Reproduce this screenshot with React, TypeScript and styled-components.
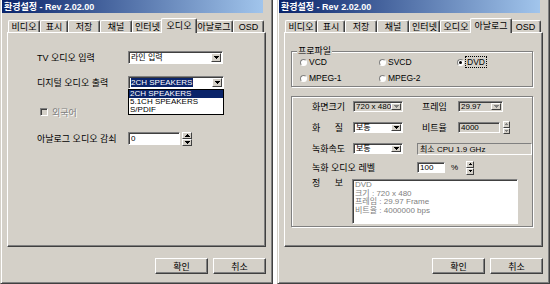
import { createGlobalStyle, styled } from 'styled-components';

const FACE = '#d4d0c8';
const SHADOW = '#808080';
const DARK = '#404040';
const LIGHT = '#ffffff';
const SELECT = '#0a246a';

const GlobalStyle = createGlobalStyle`
  html, body {
    margin: 0;
    padding: 0;
    background: #fff;
  }

  body {
    font-family: "Liberation Sans", "Noto Sans CJK KR", sans-serif;
    font-size: 8px;
    color: #000;
  }

  * {
    box-sizing: border-box;
  }
`;

const Screen = styled.div`
  width: 550px;
  height: 284px;
  display: flex;
  gap: 4px;
  overflow: hidden;
`;

const Window = styled.div`
  width: 273px;
  height: 284px;
  flex: none;
  display: flex;
  flex-direction: column;

  padding: 0 1px 1px;
  background: ${FACE};
  border-left: 1px solid ${FACE};
  border-right: 1px solid ${DARK};
  border-bottom: 1px solid ${DARK};
  box-shadow: inset 1px 0 0 ${LIGHT}, inset -1px -1px 0 ${SHADOW};
`;

const TitleBar = styled.div`
  height: 13px;
  flex: none;
  display: flex;
  align-items: center;

  padding-left: 2px;
  background: linear-gradient(to right, ${SELECT}, #a6caf0);
`;

const TitleText = styled.span`
  font-size: 9px;
  font-weight: 700;
  color: #fff;
  white-space: nowrap;
`;

const TitleEnd = styled.div`
  width: 8px;
  height: 100%;
  margin-left: auto;
  background: ${FACE};
`;

const Body = styled.div`
  flex: 1;
  display: flex;
  flex-direction: column;
  padding: 5px 5px 0;
`;

const TabStrip = styled.div`
  height: 14px;
  flex: none;
  display: flex;
  align-items: flex-end;
  padding-left: 1px;
  position: relative;
  z-index: 1;
`;

const Tab = styled.div<{ $w: number; $active?: boolean }>`
  width: ${(p) => (p.$active ? p.$w + 4 : p.$w)}px;
  height: ${(p) => (p.$active ? 15 : 12)}px;
  flex: none;
  display: flex;
  align-items: center;
  justify-content: center;
  margin: ${(p) => (p.$active ? '0 -2px -1px' : '0')};
  position: relative;
  z-index: ${(p) => (p.$active ? 2 : 1)};

  padding-bottom: ${(p) => (p.$active ? 2 : 0)}px;
  background: ${FACE};
  border-top: 1px solid ${LIGHT};
  border-left: 1px solid ${LIGHT};
  border-right: 1px solid ${DARK};
  border-radius: 2px 2px 0 0;
  box-shadow: inset -1px 0 0 ${SHADOW};

  font-size: 9px;
  white-space: nowrap;
`;

const Panel = styled.div`
  height: 215px;
  flex: none;
  display: flex;
  flex-direction: column;

  border-top: 1px solid ${LIGHT};
  border-left: 1px solid ${LIGHT};
  border-right: 1px solid ${DARK};
  border-bottom: 1px solid ${DARK};
  box-shadow: inset -1px -1px 0 ${SHADOW};
`;

const ButtonRow = styled.div`
  display: flex;
  justify-content: flex-end;
  gap: 5px;
  margin-top: 11px;
`;

const PushButton = styled.div`
  width: 53px;
  height: 16px;
  display: flex;
  align-items: center;
  justify-content: center;

  background: ${FACE};
  border: 1px solid;
  border-color: ${LIGHT} ${DARK} ${DARK} ${LIGHT};
  box-shadow: inset -1px -1px 0 ${SHADOW};

  font-size: 9px;
`;

/* ---------- form controls ---------- */

const FormRow = styled.div<{ $gap: number; $h?: number; $top?: boolean }>`
  height: ${(p) => p.$h ?? 11}px;
  flex: none;
  display: flex;
  align-items: ${(p) => (p.$top ? 'flex-start' : 'center')};
  margin-top: ${(p) => p.$gap}px;
`;

const FieldLabel = styled.span<{ $w?: number; $ml?: number; $mt?: number }>`
  width: ${(p) => (p.$w ? `${p.$w}px` : 'auto')};
  flex: none;
  margin-left: ${(p) => p.$ml ?? 0}px;
  margin-top: ${(p) => p.$mt ?? 0}px;
  font-size: 9px;
  white-space: nowrap;
`;

const SpacedLabel = styled.span`
  width: 31px;
  display: flex;
  justify-content: space-between;
`;

const Sunken = styled.div<{ $w: number; $h?: number; $ml?: number; $disabled?: boolean }>`
  position: relative;
  width: ${(p) => p.$w}px;
  height: ${(p) => (p.$h ? `${p.$h}px` : '100%')};
  flex: none;
  display: flex;
  align-items: center;
  margin-left: ${(p) => p.$ml ?? 0}px;

  padding: 1px 1px 1px 2px;
  background: ${(p) => (p.$disabled ? FACE : '#fff')};
  border: 1px solid;
  border-color: ${SHADOW} ${LIGHT} ${LIGHT} ${SHADOW};
  box-shadow: inset 1px 1px 0 ${DARK};
`;

const FieldText = styled.span`
  flex: 1;
  overflow: hidden;
  white-space: nowrap;
  font-size: 8px;
  line-height: 9px;
`;

const Highlight = styled.span`
  background: ${SELECT};
  color: #fff;
  padding-right: 1px;
`;

const DropButton = styled.div`
  width: 10px;
  height: 100%;
  flex: none;
  display: flex;
  align-items: center;
  justify-content: center;

  background: ${FACE};
  border: 1px solid;
  border-color: ${LIGHT} ${DARK} ${DARK} ${LIGHT};
`;

const DropList = styled.div`
  position: absolute;
  top: calc(100% + 1px);
  left: -1px;
  right: -1px;
  z-index: 5;

  background: #fff;
  border: 1px solid #000;
`;

const ListItem = styled.div<{ $selected?: boolean }>`
  height: 8px;
  padding-left: 1px;
  font-size: 8px;
  line-height: 8px;
  white-space: nowrap;
  background: ${(p) => (p.$selected ? SELECT : 'transparent')};
  color: ${(p) => (p.$selected ? '#fff' : '#000')};
`;

const SpinBox = styled.div<{ $w: number; $h: number; $ml: number }>`
  width: ${(p) => p.$w}px;
  height: ${(p) => p.$h}px;
  flex: none;
  display: flex;
  flex-direction: column;
  margin-left: ${(p) => p.$ml}px;
`;

const SpinHalf = styled.div`
  flex: 1;
  display: flex;
  align-items: center;
  justify-content: center;

  background: ${FACE};
  border: 1px solid;
  border-color: ${LIGHT} ${DARK} ${DARK} ${LIGHT};
`;

const Arrow = ({ up, small, disabled }: { up?: boolean; small?: boolean; disabled?: boolean }) => {
  const d = small
    ? up
      ? 'M1 0h1v1H1z M0 1h3v1H0z'
      : 'M0 0h3v1H0z M1 1h1v1H1z'
    : up
      ? 'M2 0h1v1H2z M1 1h3v1H1z M0 2h5v1H0z'
      : 'M0 0h5v1H0z M1 1h3v1H1z M2 2h1v1H2z';
  return (
    <svg width={small ? 3 : 5} height={small ? 2 : 3} shapeRendering="crispEdges">
      <path d={d} fill={disabled ? SHADOW : '#000'} />
    </svg>
  );
};

const Spinner = ({ w, h, ml, small, disabled }: { w: number; h: number; ml: number; small?: boolean; disabled?: boolean }) => (
  <SpinBox $w={w} $h={h} $ml={ml}>
    <SpinHalf>
      <Arrow up small={small} disabled={disabled} />
    </SpinHalf>
    <SpinHalf>
      <Arrow small={small} disabled={disabled} />
    </SpinHalf>
  </SpinBox>
);

const Combo = ({ w, children, disabled, ml, list }: { w: number; children: React.ReactNode; disabled?: boolean; ml?: number; list?: string[] }) => (
  <Sunken $w={w} $ml={ml} $disabled={disabled}>
    <FieldText>{children}</FieldText>
    <DropButton>
      <Arrow disabled={disabled} />
    </DropButton>
    {list && (
      <DropList>
        {list.map((item, i) => (
          <ListItem key={item} $selected={i === 0}>
            {item}
          </ListItem>
        ))}
      </DropList>
    )}
  </Sunken>
);

/* ---------- audio tab ---------- */

const AudioPage = styled.div`
  display: flex;
  flex-direction: column;
  padding: 18px 0 0 29px;
`;

const CheckRow = styled.div`
  height: 10px;
  display: flex;
  align-items: center;
  gap: 4px;
  margin: 18px 0 0 3px;
`;

const CheckBox = styled.div`
  width: 8px;
  height: 8px;
  background: ${FACE};
  border: 1px solid;
  border-color: ${SHADOW} ${LIGHT} ${LIGHT} ${SHADOW};
  box-shadow: inset 1px 1px 0 ${DARK};
`;

const DisabledText = styled.span`
  font-size: 9px;
  color: ${SHADOW};
  text-shadow: 1px 1px 0 ${LIGHT};
`;

/* ---------- analog tab ---------- */

const AnalogPage = styled.div`
  display: flex;
  flex-direction: column;
  padding: 18px 0 0 6px;
`;

const GroupBox = styled.div`
  position: relative;
  width: 242px;
  height: 36px;
  display: grid;
  grid-template-columns: 79px 78px auto;
  grid-auto-rows: 8px;
  row-gap: 8px;

  padding: 6px 0 0 8px;
  border: 1px solid ${SHADOW};
  box-shadow: inset 1px 1px 0 ${LIGHT}, 1px 1px 0 ${LIGHT};
`;

const GroupLegend = styled.span`
  position: absolute;
  top: -6px;
  left: 5px;
  padding: 0 1px;
  background: ${FACE};
  font-size: 9px;
  line-height: 10px;
`;

const RadioItem = styled.div`
  display: flex;
  align-items: center;
  gap: 2px;
  font-size: 8.5px;
  white-space: nowrap;
`;

const RadioDot = styled.div<{ $checked?: boolean }>`
  width: 7px;
  height: 7px;
  flex: none;
  display: flex;
  align-items: center;
  justify-content: center;
  border-radius: 50%;
  background: #fff;
  border: 1px solid;
  border-color: ${SHADOW} ${LIGHT} ${LIGHT} ${SHADOW};

  &::after {
    content: '';
    width: 3px;
    height: 3px;
    border-radius: 50%;
    background: ${(p) => (p.$checked ? '#000' : 'transparent')};
  }
`;

const FocusText = styled.span`
  padding: 0 1px;
  outline: 1px dotted #000;
`;

const Frame = styled.div`
  width: 242px;
  height: 131px;
  flex: none;
  display: flex;
  flex-direction: column;
  margin-top: 9px;

  padding: 4px 0 0 20px;
  border: 1px solid ${SHADOW};
  box-shadow: inset 1px 1px 0 ${LIGHT}, 1px 1px 0 ${LIGHT};
`;

const StaticBox = styled.div<{ $w: number; $ml: number }>`
  width: ${(p) => p.$w}px;
  height: 12px;
  flex: none;
  display: flex;
  align-items: center;
  margin-left: ${(p) => p.$ml}px;

  padding-left: 2px;
  border: 1px solid;
  border-color: ${SHADOW} ${LIGHT} ${LIGHT} ${SHADOW};
  font-size: 8px;
`;

const Percent = styled.span`
  margin-left: 6px;
  font-size: 8px;
`;

const InfoBox = styled.div`
  width: 166px;
  height: 45px;
  flex: none;

  padding: 1px 2px;
  background: #fff;
  border: 1px solid;
  border-color: ${SHADOW} ${LIGHT} ${LIGHT} ${SHADOW};
  box-shadow: inset 1px 1px 0 ${DARK};

  font-size: 8px;
  line-height: 8.5px;
  color: ${SHADOW};
`;

const TABS = [
  { label: '비디오', w: 32 },
  { label: '표시', w: 28 },
  { label: '저장', w: 32 },
  { label: '채널', w: 32 },
  { label: '인터넷', w: 31 },
  { label: '오디오', w: 32 },
  { label: '아날로그', w: 38 },
  { label: 'OSD', w: 31 },
];

const SettingsWindow = ({ active, children }: { active: string; children: React.ReactNode }) => (
  <Window>
    <TitleBar>
      <TitleText>환경설정 - Rev 2.02.00</TitleText>
      <TitleEnd />
    </TitleBar>
    <Body>
      <TabStrip>
        {TABS.map((t) => (
          <Tab key={t.label} $w={t.w} $active={t.label === active}>
            {t.label}
          </Tab>
        ))}
      </TabStrip>
      <Panel>{children}</Panel>
      <ButtonRow>
        <PushButton>확인</PushButton>
        <PushButton>취소</PushButton>
      </ButtonRow>
    </Body>
  </Window>
);

export default function App() {
  return (
    <>
      <GlobalStyle />
      <Screen>
        <SettingsWindow active="오디오">
          <AudioPage>
            <FormRow $gap={0} $h={13}>
              <FieldLabel $w={91}>TV 오디오 입력</FieldLabel>
              <Combo w={95}>라인 입력</Combo>
            </FormRow>
            <FormRow $gap={12} $h={13}>
              <FieldLabel $w={91}>디지털 오디오 출력</FieldLabel>
              <Combo w={96} list={['2CH SPEAKERS', '5.1CH SPEAKERS', 'S/PDIF']}>
                <Highlight>2CH SPEAKERS</Highlight>
              </Combo>
            </FormRow>
            <CheckRow>
              <CheckBox />
              <DisabledText>외국어</DisabledText>
            </CheckRow>
            <FormRow $gap={15} $h={13}>
              <FieldLabel $w={91}>아날로그 오디오 감쇠</FieldLabel>
              <Sunken $w={52}>
                <FieldText>0</FieldText>
              </Sunken>
              <Spinner w={10} h={14} ml={2} />
            </FormRow>
          </AudioPage>
        </SettingsWindow>

        <SettingsWindow active="아날로그">
          <AnalogPage>
            <GroupBox>
              <GroupLegend>프로파일</GroupLegend>
              <RadioItem>
                <RadioDot />
                VCD
              </RadioItem>
              <RadioItem>
                <RadioDot />
                SVCD
              </RadioItem>
              <RadioItem>
                <RadioDot $checked />
                <FocusText>DVD</FocusText>
              </RadioItem>
              <RadioItem>
                <RadioDot />
                MPEG-1
              </RadioItem>
              <RadioItem>
                <RadioDot />
                MPEG-2
              </RadioItem>
            </GroupBox>

            <Frame>
              <FormRow $gap={0}>
                <FieldLabel $w={41}>화면크기</FieldLabel>
                <Combo w={50} disabled>720 x 480</Combo>
                <FieldLabel $w={36} $ml={19}>프레임</FieldLabel>
                <Combo w={45} disabled>29.97</Combo>
              </FormRow>
              <FormRow $gap={10}>
                <FieldLabel $w={41}>
                  <SpacedLabel>
                    <span>화</span>
                    <span>질</span>
                  </SpacedLabel>
                </FieldLabel>
                <Combo w={50}>보통</Combo>
                <FieldLabel $w={36} $ml={19}>비트율</FieldLabel>
                <Sunken $w={42} $disabled>
                  <FieldText>4000</FieldText>
                </Sunken>
                <Spinner w={7} h={13} ml={3} small disabled />
              </FormRow>
              <FormRow $gap={10}>
                <FieldLabel $w={41}>녹화속도</FieldLabel>
                <Combo w={50}>보통</Combo>
                <StaticBox $w={115} $ml={14}>최소 CPU 1.9 GHz</StaticBox>
              </FormRow>
              <FormRow $gap={8}>
                <FieldLabel $w={105}>녹화 오디오 레벨</FieldLabel>
                <Sunken $w={28}>
                  <FieldText>100</FieldText>
                </Sunken>
                <Percent>%</Percent>
                <Spinner w={8} h={14} ml={8} small />
              </FormRow>
              <FormRow $gap={6} $h={45} $top>
                <FieldLabel $w={40} $mt={-3}>
                  <SpacedLabel>
                    <span>정</span>
                    <span>보</span>
                  </SpacedLabel>
                </FieldLabel>
                <InfoBox>
                  DVD
                  <br />
                  크기 : 720 x 480
                  <br />
                  프레임 : 29.97 Frame
                  <br />
                  비트율 : 4000000 bps
                </InfoBox>
              </FormRow>
            </Frame>
          </AnalogPage>
        </SettingsWindow>
      </Screen>
    </>
  );
}
